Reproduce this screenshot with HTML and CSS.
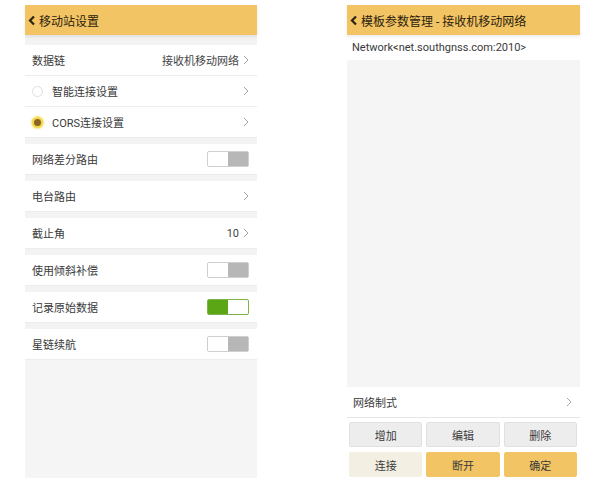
FILE: index.html
```html
<!DOCTYPE html>
<html>
<head>
    <title>移动站设置</title>
    <link rel="stylesheet" href="styles.css">
</head>
<body>
    <div class="page">
        <div class="screen">
            <div class="title-bar">
                <svg class="back" width="8" height="11" viewBox="0 0 8 11"><polyline points="6,1.5 2,5.5 6,9.5" fill="none" stroke="#2b2210" stroke-width="2.2"/></svg>
                移动站设置
            </div>
            <div class="band"></div>
            <div class="row"><span class="label">数据链</span><span class="value">接收机移动网络</span><svg class="arrow" width="6" height="10" viewBox="0 0 6 10"><polyline points="1,1 5,5 1,9" fill="none" stroke="#9a9a9a" stroke-width="0.9"/></svg></div>
            <div class="row"><span class="radio"></span><span class="label">智能连接设置</span><svg class="arrow" width="6" height="10" viewBox="0 0 6 10"><polyline points="1,1 5,5 1,9" fill="none" stroke="#9a9a9a" stroke-width="0.9"/></svg></div>
            <div class="row"><span class="radio on"></span><span class="label">CORS连接设置</span><svg class="arrow" width="6" height="10" viewBox="0 0 6 10"><polyline points="1,1 5,5 1,9" fill="none" stroke="#9a9a9a" stroke-width="0.9"/></svg></div>
            <div class="gap"></div>
            <div class="row"><span class="label">网络差分路由</span><span class="switch"></span></div>
            <div class="gap"></div>
            <div class="row"><span class="label">电台路由</span><svg class="arrow" width="6" height="10" viewBox="0 0 6 10"><polyline points="1,1 5,5 1,9" fill="none" stroke="#9a9a9a" stroke-width="0.9"/></svg></div>
            <div class="gap"></div>
            <div class="row"><span class="label">截止角</span><span class="value">10</span><svg class="arrow" width="6" height="10" viewBox="0 0 6 10"><polyline points="1,1 5,5 1,9" fill="none" stroke="#9a9a9a" stroke-width="0.9"/></svg></div>
            <div class="gap"></div>
            <div class="row"><span class="label">使用倾斜补偿</span><span class="switch"></span></div>
            <div class="gap"></div>
            <div class="row"><span class="label">记录原始数据</span><span class="switch on"></span></div>
            <div class="gap"></div>
            <div class="row"><span class="label">星链续航</span><span class="switch"></span></div>
            <div class="rest"></div>
        </div>

        <div class="screen">
            <div class="title-bar">
                <svg class="back" width="8" height="11" viewBox="0 0 8 11"><polyline points="6,1.5 2,5.5 6,9.5" fill="none" stroke="#2b2210" stroke-width="2.2"/></svg>
                模板参数管理 - 接收机移动网络
            </div>
            <div class="net-item">Network&lt;net.southgnss.com:2010&gt;</div>
            <div class="list-area"></div>
            <div class="row top-line"><span class="label">网络制式</span><svg class="arrow" width="6" height="10" viewBox="0 0 6 10"><polyline points="1,1 5,5 1,9" fill="none" stroke="#9a9a9a" stroke-width="0.9"/></svg></div>
            <div class="buttons">
                <div class="btn">增加</div>
                <div class="btn">编辑</div>
                <div class="btn">删除</div>
                <div class="btn light">连接</div>
                <div class="btn yellow">断开</div>
                <div class="btn yellow">确定</div>
            </div>
        </div>
    </div>
</body>
</html>
```

FILE: styles.css
```css
body {
    margin: 0;
    padding: 0;
    background: #ffffff;
    font-family: Roboto, "Noto Sans CJK SC", sans-serif;
    color: #3a3a3a;
}
.page {
    display: flex;
    gap: 90px;
    padding: 5px 0 0 25px;
    height: 473px;
    overflow: hidden;
}
.screen {
    width: 232px;
    display: flex;
    flex-direction: column;
    background: #f5f5f5;
    height: 473px;
}
.screen + .screen {
    width: 233px;
    background: #ffffff;
}
.title-bar {
    height: 30px;
    background: #f3c463;
    display: flex;
    align-items: center;
    font-size: 12px;
    color: #2b2210;
    padding-left: 3px;
    box-shadow: 0 2px 3px rgba(0, 0, 0, 0.08);
    position: relative;
}
.back {
    margin-right: 3px;
}
.band {
    height: 10px;
    background: #f3f3f3;
}
.row {
    height: 30px;
    border-bottom: 1px solid #ececec;
    background: #ffffff;
    display: flex;
    align-items: center;
    padding: 0 8px 0 7px;
    font-size: 11px;
}
.label {
    flex: 1;
}
.value {
    color: #444444;
    margin-right: 4px;
}
.gap {
    height: 6px;
    background: #f3f3f3;
}
.rest {
    flex: 1;
    background: #f5f5f5;
}
.radio {
    width: 9px;
    height: 9px;
    border: 1px solid #dedede;
    border-radius: 50%;
    margin: 0 9px 0 0;
    background: #ffffff;
}
.radio.on {
    background: #8a6422;
    border: 2px solid #f2d84c;
    width: 7px;
    height: 7px;
    box-shadow: 0 0 2px 1px #f6e27a;
}
.switch {
    width: 40px;
    height: 14px;
    border: 1px solid #cfcfcf;
    border-radius: 2px;
    background: linear-gradient(to right, #ffffff 50%, #b7b7b7 50%);
}
.switch.on {
    border-color: #7ab54a;
    background: linear-gradient(to right, #5aa615 50%, #ffffff 50%);
}
.net-item {
    height: 25px;
    display: flex;
    align-items: center;
    padding-left: 5px;
    font-size: 11px;
    background: #ffffff;
}
.list-area {
    flex: 1;
    background: #f5f5f5;
}
.top-line {
    padding-left: 6px;
    border-bottom: 1px solid #e6e6e6;
}
.buttons {
    display: grid;
    grid-template-columns: 1fr 1fr 1fr;
    gap: 5px 4px;
    padding: 4px 3px 1px 2px;
    background: #ffffff;
}
.btn {
    height: 25px;
    display: flex;
    align-items: center;
    justify-content: center;
    font-size: 11px;
    background: #ededed;
    border: 1px solid #e0e0e0;
    border-radius: 2px;
    box-sizing: border-box;
}
.btn.light {
    background: #f3efe2;
    border-color: #f3efe2;
}
.btn.yellow {
    background: #f3c463;
    border-color: #f3c463;
}
```
